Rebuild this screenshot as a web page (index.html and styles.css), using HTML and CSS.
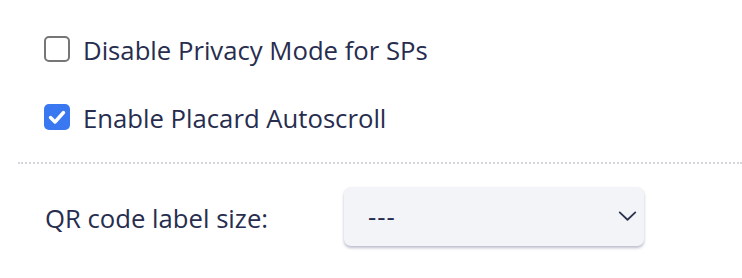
FILE: index.html
```html
<!DOCTYPE html>
<html>
<head>
<meta charset="utf-8">
<link rel="stylesheet" href="styles.css">
</head>
<body>
<div class="panel">
  <div class="options">
    <label class="check-row">
      <span class="box"></span>
      <span class="label">Disable Privacy Mode for SPs</span>
    </label>
    <label class="check-row">
      <span class="box checked">
        <svg viewBox="0 0 26 26" width="26" height="26"><path d="M6.5 13.5 L11 18 L19.5 8.5" fill="none" stroke="#fff" stroke-width="3.4" stroke-linecap="round" stroke-linejoin="round"/></svg>
      </span>
      <span class="label">Enable Placard Autoscroll</span>
    </label>
  </div>
  <div class="divider"></div>
  <div class="field-row">
    <span class="field-label">QR code label size:</span>
    <div class="select">
      <span class="select-value">---</span>
      <svg class="chev" viewBox="0 0 20 12" width="19" height="11"><path d="M1.5 1.5 L10 9.5 L18.5 1.5" fill="none" stroke="#2d3350" stroke-width="2" stroke-linecap="round" stroke-linejoin="round"/></svg>
    </div>
  </div>
</div>
</body>
</html>
```
FILE: styles.css
```css
html, body {
  margin: 0;
  padding: 0;
  background: #fff;
}
body {
  width: 742px;
  height: 278px;
  overflow: hidden;
  font-family: "Open Sans", "Noto Sans", sans-serif;
  color: #272d4e;
}
.panel {
  padding-top: 36px;
}
.options {
  display: flex;
  flex-direction: column;
  gap: 42px;
  padding-left: 44px;
}
.check-row {
  display: flex;
  align-items: center;
  gap: 13px;
  height: 26px;
}
.box {
  box-sizing: border-box;
  width: 26px;
  height: 26px;
  border: 2px solid #767676;
  border-radius: 5px;
  display: flex;
  align-items: center;
  justify-content: center;
}
.box.checked {
  border: none;
  background: #3a78f2;
}
.label {
  font-size: 25.7px;
  line-height: 26px;
  padding-top: 4px;
}
.divider {
  margin: 32px 0 0 18px;
  border-top: 2px dotted #d6d6da;
}
.field-row {
  display: flex;
  align-items: center;
  padding: 23px 0 0 45px;
}
.field-label {
  font-size: 25.7px;
  width: 299px;
  padding-top: 4px;
}
.select {
  box-sizing: border-box;
  width: 300px;
  height: 59px;
  background: #f3f4f7;
  border-radius: 7px;
  box-shadow: 0 2px 3px rgba(60, 64, 110, 0.35);
  display: flex;
  align-items: center;
  justify-content: space-between;
  padding: 0 7px 0 24px;
}
.select-value {
  font-size: 25.7px;
  letter-spacing: 1px;
}
```
